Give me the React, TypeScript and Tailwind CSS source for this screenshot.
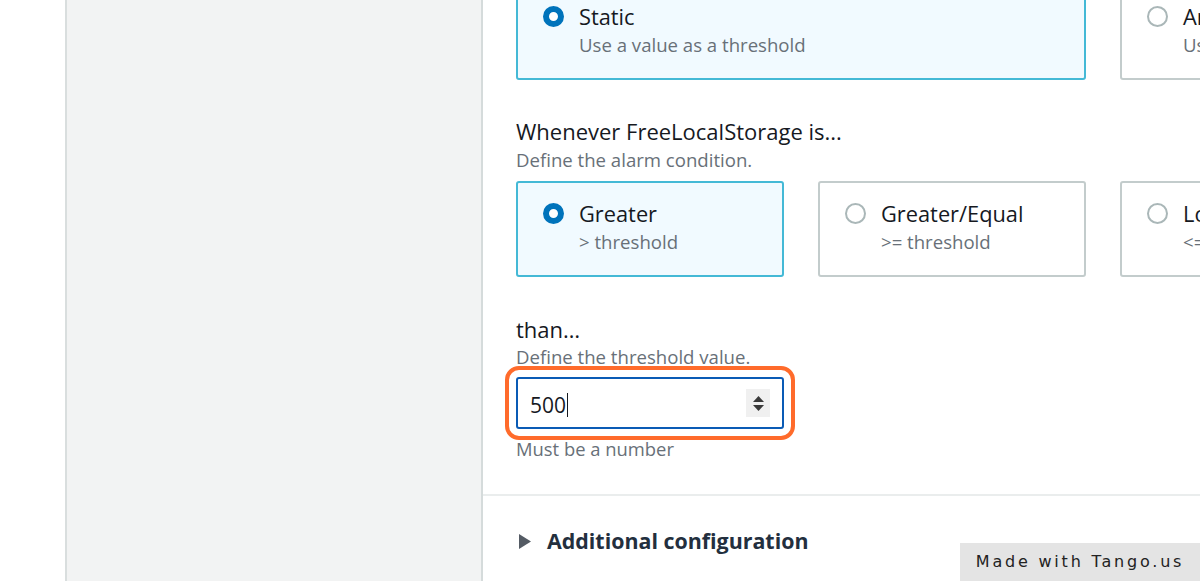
const font = "font-['Open_Sans','Liberation_Sans',sans-serif]";

function Radio({ checked }: { checked: boolean }) {
  return checked ? (
    <span className="mt-[2px] box-border block h-[21px] w-[21px] shrink-0 rounded-full border-[6px] border-[#0073bb] bg-white" />
  ) : (
    <span className="mt-[2px] box-border block h-[21px] w-[21px] shrink-0 rounded-full border-2 border-[#aab7b8] bg-white" />
  );
}

function Tile({
  label,
  sub,
  checked,
  width,
}: {
  label: string;
  sub: string;
  checked?: boolean;
  width: string;
}) {
  return (
    <div
      className={`box-border flex h-[96px] shrink-0 items-start gap-[15px] rounded-[3px] border-2 pl-[25px] pt-[18px] ${width} ${
        checked ? "border-[#44b9d6] bg-[#f1faff]" : "border-[#c3cccc] bg-white"
      }`}
    >
      <Radio checked={!!checked} />
      <div className="flex flex-col">
        <span className="whitespace-nowrap text-[21.8px] leading-[26px] text-[#16191f]">{label}</span>
        <span className="mt-[4px] whitespace-nowrap text-[18.6px] leading-[22px] text-[#687078]">{sub}</span>
      </div>
    </div>
  );
}

export default function App() {
  return (
    <div className={`relative flex h-[581px] w-[1200px] overflow-hidden bg-white ${font}`}>
      <div className="w-[65px] shrink-0 bg-white" />
      <div className="w-[418px] shrink-0 border-x-2 border-l-[#d9dede] border-r-[#d5dbdb] bg-[#f2f3f3]" />
      <main className="min-w-0 flex-1 overflow-hidden bg-white">
        <div className="pl-[33px]">
          <div className="-mt-[16px] flex gap-[34px]">
            <Tile checked label="Static" sub="Use a value as a threshold" width="w-[570px]" />
            <Tile label="Anomaly detection" sub="Use a band as a threshold" width="w-[570px]" />
          </div>

          <div className="mt-[37px] text-[22px] leading-[28px] text-[#16191f]">
            Whenever FreeLocalStorage is...
          </div>
          <div className="mt-[4px] text-[18.6px] leading-[22px] text-[#687078]">
            Define the alarm condition.
          </div>
          <div className="mt-[10px] flex gap-[34px]">
            <Tile checked label="Greater" sub="> threshold" width="w-[268px]" />
            <Tile label="Greater/Equal" sub=">= threshold" width="w-[268px]" />
            <Tile label="Lower/Equal" sub="<= threshold" width="w-[268px]" />
          </div>

          <div className="mt-[38px] text-[22px] leading-[28px] text-[#16191f]">than…</div>
          <div className="mt-[3px] text-[18.6px] leading-[22px] text-[#687078]">
            Define the threshold value.
          </div>
          <div className="mt-[9px] box-border flex h-[52px] w-[268px] items-center rounded-[3px] border-2 border-[#0a5bb5] pl-[12px] pr-[12px] outline-4 outline-offset-[7px] outline-[#ff6b2b]">
            <span className="flex-1 text-[21px] leading-[26px] text-[#16191f]">
              500<span className="ml-[1px] inline-block h-[24px] w-[1px] translate-y-[4px] bg-[#16191f]" />
            </span>
            <span className="flex h-[28px] w-[24px] flex-col items-center justify-center gap-[3px] bg-[#f0f0f0]">
              <svg width="11" height="6" viewBox="0 0 11 6">
                <path d="M5.5 0 L11 6 L0 6 Z" fill="#3a3a3a" />
              </svg>
              <svg width="11" height="6" viewBox="0 0 11 6">
                <path d="M0 0 L11 0 L5.5 6 Z" fill="#3a3a3a" />
              </svg>
            </span>
          </div>
          <div className="mt-[9px] text-[18.4px] leading-[22px] text-[#687078]">Must be a number</div>
        </div>

        <div className="mt-[34px] border-t-2 border-[#eaeded]" />

        <div className="flex items-center gap-[16px] pl-[36px] pt-[31px]">
          <svg width="12" height="15" viewBox="0 0 12 15">
            <path d="M0 0 L12 7.5 L0 15 Z" fill="#545b64" />
          </svg>
          <span className="text-[21.4px] font-bold leading-[28px] text-[#232f3e]">
            Additional configuration
          </span>
        </div>
      </main>

      <div className="absolute bottom-0 right-0 flex h-[38px] w-[240px] items-center justify-center bg-[#e4e4e4] font-['DejaVu_Sans','Liberation_Sans',sans-serif] text-[16px] tracking-[2.8px] text-[#222]">
        Made with Tango.us
      </div>
    </div>
  );
}
